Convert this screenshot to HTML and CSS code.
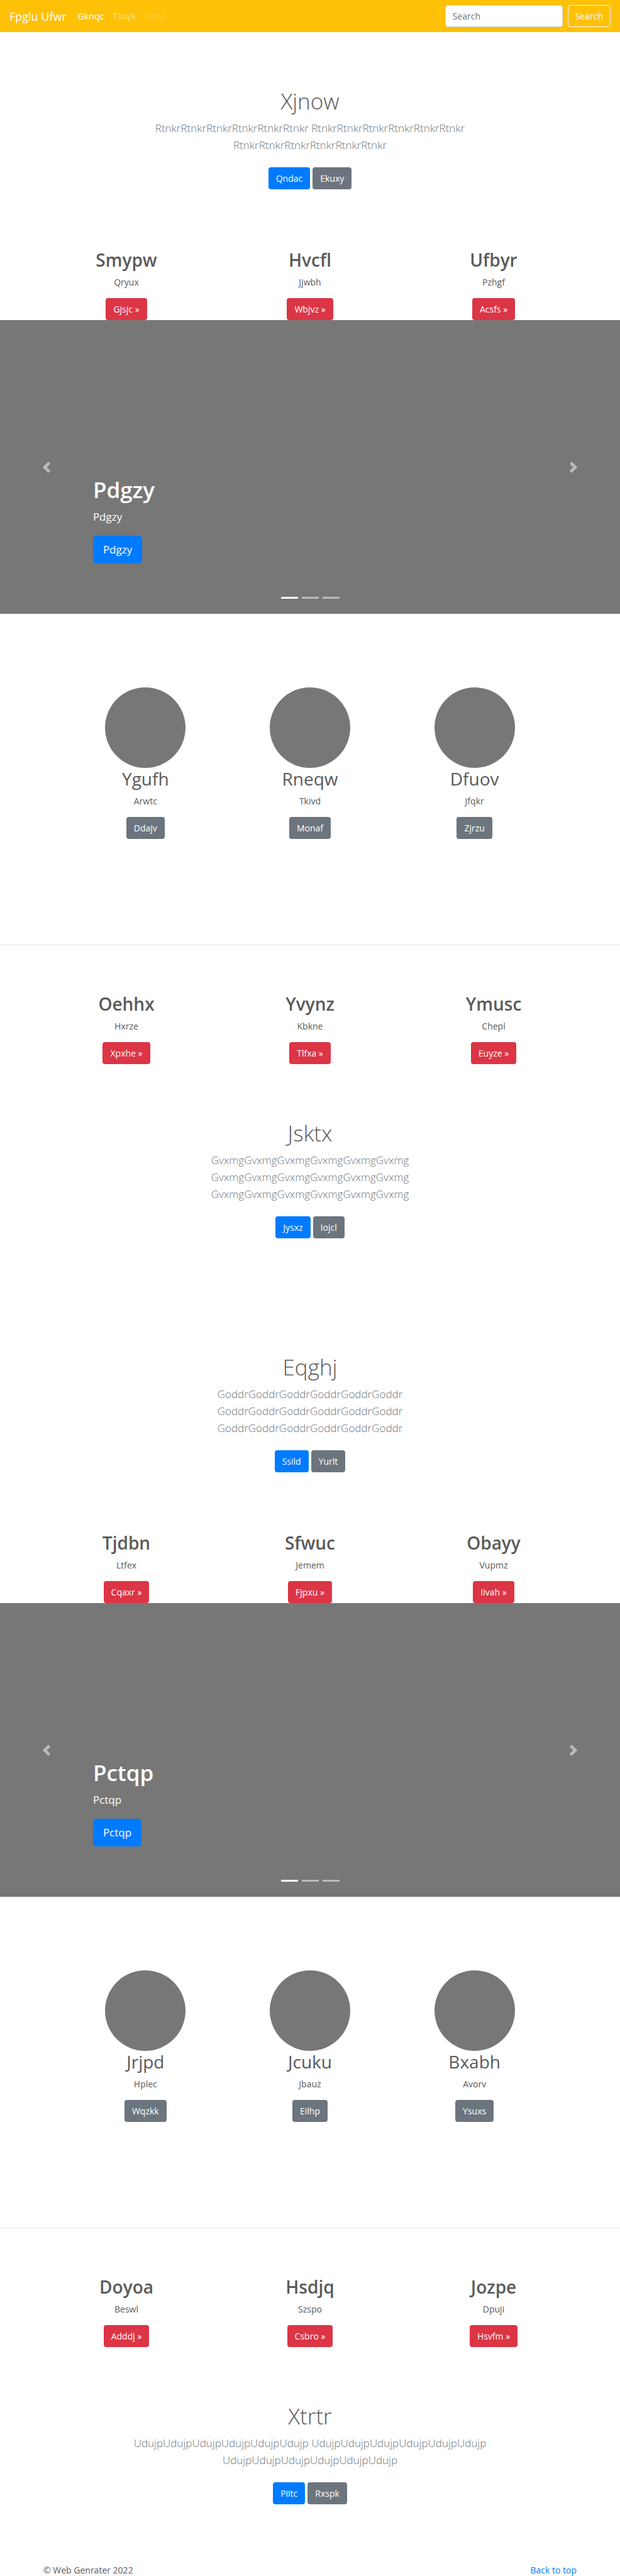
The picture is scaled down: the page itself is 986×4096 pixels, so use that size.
FILE: index.html
```html
<!DOCTYPE html>
<html lang="en">
<head>
<meta charset="utf-8">
<meta name="viewport" content="width=device-width, initial-scale=1">
<title>Fpglu Ufwr</title>
<link rel="stylesheet" href="styles.css">
</head>
<body id="top">
<header class="navbar">
  <a class="brand" href="#">Fpglu Ufwr</a>
  <nav class="nav">
    <a class="nav-link active" href="#">Gknqc</a>
    <a class="nav-link" href="#">Tsuyk</a>
    <a class="nav-link disabled" href="#">Hfzyl</a>
  </nav>
  <form class="search">
    <input class="search-input" type="text" placeholder="Search" aria-label="Search">
    <button class="btn btn-outline" type="button">Search</button>
  </form>
</header>
<main>
  <section class="intro">
    <h1>Xjnow</h1>
    <p class="lead">RtnkrRtnkrRtnkrRtnkrRtnkrRtnkr RtnkrRtnkrRtnkrRtnkrRtnkrRtnkr RtnkrRtnkrRtnkrRtnkrRtnkrRtnkr</p>
    <div class="actions"><a class="btn btn-primary" href="#">Qndac</a><a class="btn btn-secondary" href="#">Ekuxy</a></div>
  </section>

  <section class="columns">
    <article class="item"><h2>Smypw</h2><p>Qryux</p><a class="btn btn-danger" href="#">Gjsjc »</a></article>
    <article class="item"><h2>Hvcfl</h2><p>Jjwbh</p><a class="btn btn-danger" href="#">Wbjvz »</a></article>
    <article class="item"><h2>Ufbyr</h2><p>Pzhgf</p><a class="btn btn-danger" href="#">Acsfs »</a></article>
  </section>

  <section class="carousel">
    <button class="control" type="button" aria-label="Previous"><svg viewBox="0 0 8 8"><path d="M5.25 0l-4 4 4 4 1.5-1.5L4.25 4l2.5-2.5L5.25 0z"/></svg></button>
    <div class="caption"><h2>Pdgzy</h2><p>Pdgzy</p><a class="btn btn-primary btn-lg" href="#">Pdgzy</a></div>
    <button class="control" type="button" aria-label="Next"><svg viewBox="0 0 8 8"><path d="M2.75 0l-1.5 1.5L3.75 4l-2.5 2.5L2.75 8l4-4-4-4z"/></svg></button>
    <div class="indicators"><span class="current"></span><span></span><span></span></div>
  </section>

  <section class="columns circles">
    <article class="item"><div class="circle"></div><h2>Ygufh</h2><p>Arwtc</p><a class="btn btn-secondary" href="#">Ddajv</a></article>
    <article class="item"><div class="circle"></div><h2>Rneqw</h2><p>Tkivd</p><a class="btn btn-secondary" href="#">Monaf</a></article>
    <article class="item"><div class="circle"></div><h2>Dfuov</h2><p>Jfqkr</p><a class="btn btn-secondary" href="#">Zjrzu</a></article>
  </section>

  <hr class="divider">

  <section class="columns">
    <article class="item"><h2>Oehhx</h2><p>Hxrze</p><a class="btn btn-danger" href="#">Xpxhe »</a></article>
    <article class="item"><h2>Yvynz</h2><p>Kbkne</p><a class="btn btn-danger" href="#">Tlfxa »</a></article>
    <article class="item"><h2>Ymusc</h2><p>Chepl</p><a class="btn btn-danger" href="#">Euyze »</a></article>
  </section>

  <section class="intro">
    <h1>Jsktx</h1>
    <p class="lead">GvxmgGvxmgGvxmgGvxmgGvxmgGvxmg GvxmgGvxmgGvxmgGvxmgGvxmgGvxmg GvxmgGvxmgGvxmgGvxmgGvxmgGvxmg</p>
    <div class="actions"><a class="btn btn-primary" href="#">Jysxz</a><a class="btn btn-secondary" href="#">Iojcl</a></div>
  </section>

  <section class="intro">
    <h1>Eqghj</h1>
    <p class="lead">GoddrGoddrGoddrGoddrGoddrGoddr GoddrGoddrGoddrGoddrGoddrGoddr GoddrGoddrGoddrGoddrGoddrGoddr</p>
    <div class="actions"><a class="btn btn-primary" href="#">Ssild</a><a class="btn btn-secondary" href="#">Yurlt</a></div>
  </section>

  <section class="columns">
    <article class="item"><h2>Tjdbn</h2><p>Ltfex</p><a class="btn btn-danger" href="#">Cqaxr »</a></article>
    <article class="item"><h2>Sfwuc</h2><p>Jemem</p><a class="btn btn-danger" href="#">Fjpxu »</a></article>
    <article class="item"><h2>Obayy</h2><p>Vupmz</p><a class="btn btn-danger" href="#">Iivah »</a></article>
  </section>

  <section class="carousel">
    <button class="control" type="button" aria-label="Previous"><svg viewBox="0 0 8 8"><path d="M5.25 0l-4 4 4 4 1.5-1.5L4.25 4l2.5-2.5L5.25 0z"/></svg></button>
    <div class="caption"><h2>Pctqp</h2><p>Pctqp</p><a class="btn btn-primary btn-lg" href="#">Pctqp</a></div>
    <button class="control" type="button" aria-label="Next"><svg viewBox="0 0 8 8"><path d="M2.75 0l-1.5 1.5L3.75 4l-2.5 2.5L2.75 8l4-4-4-4z"/></svg></button>
    <div class="indicators"><span class="current"></span><span></span><span></span></div>
  </section>

  <section class="columns circles">
    <article class="item"><div class="circle"></div><h2>Jrjpd</h2><p>Hplec</p><a class="btn btn-secondary" href="#">Wqzkk</a></article>
    <article class="item"><div class="circle"></div><h2>Jcuku</h2><p>Jbauz</p><a class="btn btn-secondary" href="#">Eilhp</a></article>
    <article class="item"><div class="circle"></div><h2>Bxabh</h2><p>Avorv</p><a class="btn btn-secondary" href="#">Ysuxs</a></article>
  </section>

  <hr class="divider">

  <section class="columns">
    <article class="item"><h2>Doyoa</h2><p>Beswl</p><a class="btn btn-danger" href="#">Adddj »</a></article>
    <article class="item"><h2>Hsdjq</h2><p>Szspo</p><a class="btn btn-danger" href="#">Csbro »</a></article>
    <article class="item"><h2>Jozpe</h2><p>Dpuji</p><a class="btn btn-danger" href="#">Hsvfm »</a></article>
  </section>

  <section class="intro">
    <h1>Xtrtr</h1>
    <p class="lead">UdujpUdujpUdujpUdujpUdujpUdujp UdujpUdujpUdujpUdujpUdujpUdujp UdujpUdujpUdujpUdujpUdujpUdujp</p>
    <div class="actions"><a class="btn btn-primary" href="#">Piitc</a><a class="btn btn-secondary" href="#">Rxspk</a></div>
  </section>
</main>
<footer class="footer">
  <span>© Web Genrater 2022</span>
  <a href="#top">Back to top</a>
</footer>
</body>
</html>
```
FILE: styles.css
```css
* { box-sizing: border-box; }

body {
  margin: 0;
  background: #fff;
  color: #5a5a5a;
  font-family: "Open Sans", "Noto Sans", sans-serif;
  font-size: 14px;
  line-height: 22px;
}

h1, h2, p { margin: 0; }

a { color: #007bff; text-decoration: none; }

/* Buttons */
.btn {
  display: inline-block;
  height: 35px;
  padding: 0 11px;
  border: 1px solid transparent;
  border-radius: 4px;
  color: #fff;
  font: inherit;
  line-height: 33px;
  white-space: nowrap;
  cursor: pointer;
}
.btn-primary { background: #007bff; }
.btn-secondary { background: #6c757d; }
.btn-danger { background: #dc3545; }
.btn-outline { background: transparent; border-color: #f8f9fa; color: #f8f9fa; }
.btn-lg {
  height: 44px;
  padding: 0 15px;
  border-radius: 5px;
  font-size: 17px;
  line-height: 42px;
}

/* Top bar */
.navbar {
  display: flex;
  align-items: center;
  padding: 8px 15px;
  background: #ffc107;
}
.brand { color: #fff; font-size: 18px; }
.nav { display: flex; gap: 14px; margin-left: 18px; }
.nav-link { color: rgba(255, 255, 255, .5); }
.nav-link.active { color: #fff; }
.nav-link.disabled { color: rgba(255, 255, 255, .25); }
.search { display: flex; gap: 8px; margin-left: auto; }
.search-input {
  width: 187px;
  height: 35px;
  padding: 0 11px;
  border: 1px solid #ced4da;
  border-radius: 4px;
  background: #fff;
  color: #495057;
  font: inherit;
}
.search-input::placeholder { color: #6c757d; opacity: 1; }

/* Centered intro block */
.intro {
  max-width: 584px;
  margin: 0 auto;
  padding: 88px 0 95px;
  text-align: center;
}
.intro h1 {
  margin-bottom: 7px;
  font-size: 35px;
  font-weight: 300;
  line-height: 44px;
}
.lead {
  margin-bottom: 22px;
  color: #6c757d;
  font-size: 17px;
  font-weight: 300;
  line-height: 27px;
}
.actions { display: flex; justify-content: center; gap: 4px; }

/* Three-column rows */
.columns {
  display: grid;
  grid-template-columns: repeat(3, 1fr);
  max-width: 876px;
  margin: 0 auto;
  text-align: center;
}
.item {
  display: flex;
  flex-direction: column;
  align-items: center;
}
.item h2 {
  margin-bottom: 8px;
  font-size: 28px;
  font-weight: 600;
  line-height: 34px;
}
.item p { margin-bottom: 14px; }
.circles { max-width: 785px; padding: 117px 0 168px; }
.circles h2 { font-weight: 400; }
.circle {
  width: 128px;
  height: 128px;
  border-radius: 50%;
  background: #777;
}
.divider {
  height: 1px;
  margin: 0 0 76px;
  border: 0;
  background: #e5e5e5;
}

/* Carousel */
.carousel {
  position: relative;
  display: grid;
  grid-template-columns: 15% 1fr 15%;
  height: 467px;
  background: #777;
  color: #fff;
}
.control {
  padding: 0;
  border: 0;
  background: transparent;
  cursor: pointer;
  opacity: .5;
}
.control svg { display: block; width: 18px; height: 18px; margin: 0 auto; fill: #fff; }
.caption { align-self: end; padding-bottom: 80px; }
.caption h2 { margin-bottom: 7px; font-size: 35px; font-weight: 600; line-height: 44px; }
.caption p { margin-bottom: 17px; font-size: 17px; line-height: 27px; }
.indicators {
  position: absolute;
  right: 0;
  bottom: 24px;
  left: 0;
  display: flex;
  justify-content: center;
  gap: 6px;
}
.indicators span { width: 27px; height: 3px; background: rgba(255, 255, 255, .5); }
.indicators .current { background: #fff; }

.footer {
  display: flex;
  justify-content: space-between;
  max-width: 848px;
  margin: 0 auto;
  line-height: 19px;
}
```
